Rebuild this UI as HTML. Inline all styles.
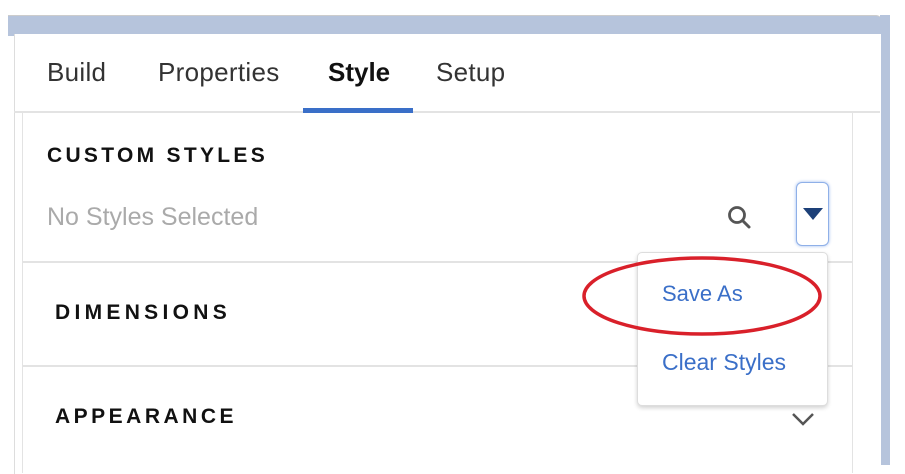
<!DOCTYPE html>
<html><head><style>
body{margin:0;width:905px;height:469px;background:#fff;position:relative;overflow:hidden;font-family:"Liberation Sans",sans-serif;}
.a{position:absolute}
</style></head><body>
<div class="a" style="left:8px;top:15px;width:874px;height:20px;background:#b6c4dc;border-top:1px solid #ccc;border-radius:0 6px 0 0"></div>
<div class="a" style="left:880px;top:15px;width:10px;height:450px;background:#b6c4dc"></div>
<div class="a" style="left:14px;top:34px;width:866px;height:440px;background:#fff;border-left:1px solid #ddd"></div>
<div class="a" style="left:14px;top:111px;width:866px;height:2px;background:#e3e3e3"></div>
<div class="a" style="left:303px;top:108px;width:110px;height:5px;background:#3a6fc8"></div>
<div class="a" style="left:47px;top:57px;font-size:26px;color:#333;letter-spacing:0.3px">Build</div>
<div class="a" style="left:158px;top:57px;font-size:26px;color:#333;letter-spacing:0.3px">Properties</div>
<div class="a" style="left:328px;top:57px;font-size:26px;color:#111;font-weight:bold">Style</div>
<div class="a" style="left:436px;top:57px;font-size:26px;color:#333;letter-spacing:0.3px">Setup</div>
<div class="a" style="left:22px;top:113px;width:1px;height:360px;background:#e3e3e3"></div>
<div class="a" style="left:852px;top:113px;width:1px;height:360px;background:#e3e3e3"></div>
<div class="a" style="left:47px;top:144px;font-size:21px;font-weight:bold;letter-spacing:3.3px;color:#111">CUSTOM STYLES</div>
<div class="a" style="left:47px;top:203px;font-size:25px;color:#aaa">No Styles Selected</div>
<svg class="a" style="left:726px;top:204px" width="28" height="28"><circle cx="11" cy="11" r="7.5" fill="none" stroke="#555" stroke-width="2.8"/><line x1="16.5" y1="16.5" x2="23" y2="23" stroke="#555" stroke-width="3" stroke-linecap="round"/></svg>
<div class="a" style="left:796px;top:182px;width:31px;height:62px;border:1px solid #8fb0e8;border-radius:6px;box-shadow:0 0 3px #9ab8ee;background:#fff"></div>
<svg class="a" style="left:802px;top:207px" width="22" height="14"><polygon points="1,1 21,1 11,13" fill="#1d4078"/></svg>
<div class="a" style="left:22px;top:261px;width:830px;height:2px;background:#e3e3e3"></div>
<div class="a" style="left:22px;top:365px;width:830px;height:2px;background:#e3e3e3"></div>
<div class="a" style="left:55px;top:301px;font-size:21px;font-weight:bold;letter-spacing:4.3px;color:#111">DIMENSIONS</div>
<div class="a" style="left:55px;top:405px;font-size:21px;font-weight:bold;letter-spacing:3.5px;color:#111">APPEARANCE</div>
<svg class="a" style="left:790px;top:410px" width="28" height="18"><polyline points="3,4 13,14 23,4" fill="none" stroke="#555" stroke-width="2.5"/></svg>
<div class="a" style="left:637px;top:252px;width:189px;height:152px;background:#fff;border:1px solid #ddd;border-radius:5px;box-shadow:0 2px 4px rgba(0,0,0,.18)"></div>
<div class="a" style="left:662px;top:281px;font-size:22px;color:#3a6fc8">Save As</div>
<div class="a" style="left:662px;top:349px;font-size:23px;color:#3a6fc8">Clear Styles</div>
<svg class="a" style="left:578px;top:252px" width="250" height="90"><ellipse cx="124" cy="44" rx="118" ry="38" fill="none" stroke="#d9202a" stroke-width="3.5"/></svg>
</body></html>
